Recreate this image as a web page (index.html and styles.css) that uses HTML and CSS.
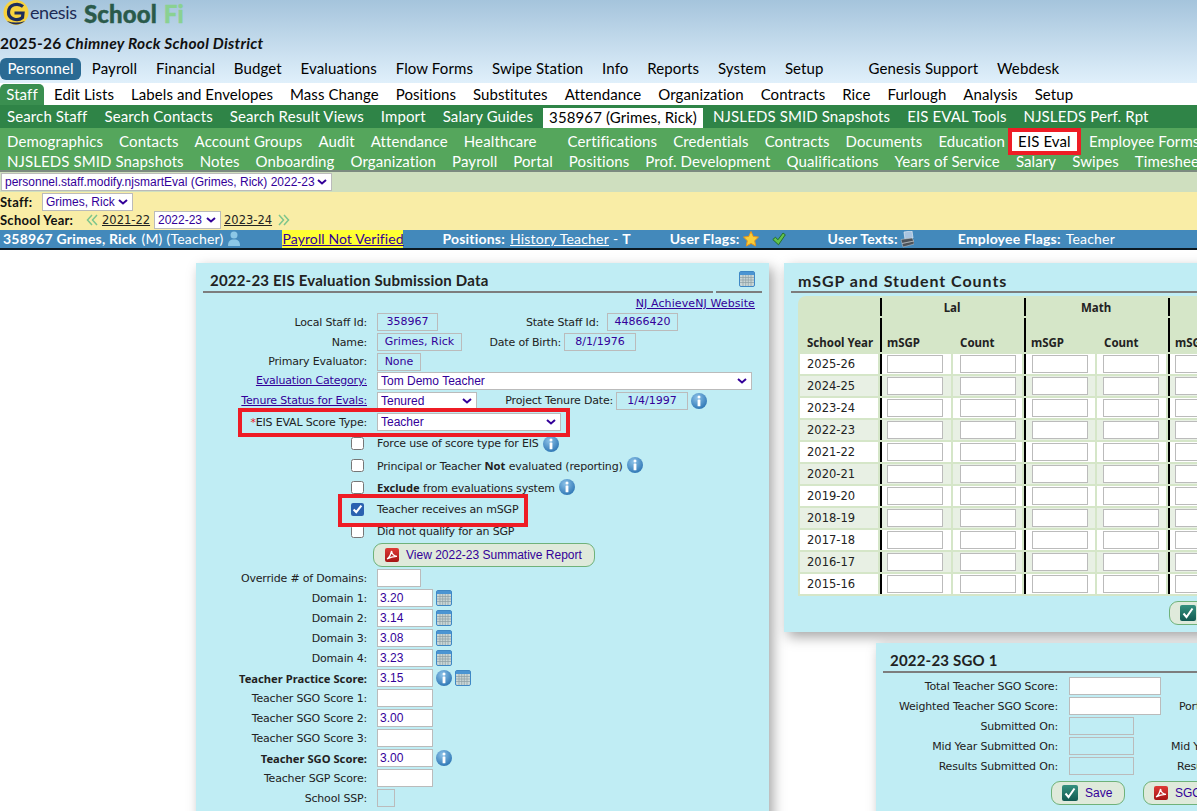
FILE: index.html
```html
<!DOCTYPE html>
<html lang="en">
<head>
<meta charset="utf-8">
<title>SchoolFi</title>
<link rel="stylesheet" href="styles.css">
</head>
<body>
<svg class="defs" width="0" height="0">
  <defs>
    <radialGradient id="gi" cx="40%" cy="30%" r="75%"><stop offset="0" stop-color="#8cc2e8"/><stop offset="1" stop-color="#2b74b3"/></radialGradient>
    <linearGradient id="gc" x1="0" y1="0" x2="0" y2="1"><stop offset="0" stop-color="#35917f"/><stop offset="1" stop-color="#125a52"/></linearGradient>
    <linearGradient id="gp" x1="0" y1="0" x2="0" y2="1"><stop offset="0" stop-color="#df3a36"/><stop offset="1" stop-color="#a51414"/></linearGradient>
    <symbol id="info" viewBox="0 0 16 16"><circle cx="8" cy="8" r="8" fill="url(#gi)"/><circle cx="8" cy="4" r="1.500" fill="#fff"/><rect x="6.600" y="6.500" width="2.800" height="6.800" rx=".4" fill="#fff"/></symbol>
    <symbol id="cal" viewBox="0 0 16 16"><rect x=".5" y=".5" width="15" height="15" rx="1.500" fill="#c9d6d6" stroke="#3f88c5"/><rect x="1" y="1" width="14" height="3" fill="#4b95d2"/><path d="M1 6.500h14M1 9h14M1 11.500h14M4 4v11M6.700 4v11M9.300 4v11M12 4v11" stroke="#8d9da3" stroke-width=".7"/></symbol>
    <symbol id="pdf" viewBox="0 0 14 14"><rect width="14" height="14" rx="2" fill="url(#gp)"/><path d="M2 11c2-1 3.500-3.500 4.600-8 .3 3 2 5 5.400 5.400C9 8.300 5.500 9 2 11z" fill="none" stroke="#fff" stroke-width="1.300"/></symbol>
    <symbol id="ok" viewBox="0 0 16 16"><rect width="16" height="16" rx="2" fill="url(#gc)"/><path d="M3.500 8.500l3 3.500 6-8.500" fill="none" stroke="#fff" stroke-width="2"/></symbol>
    <symbol id="dbl-l" viewBox="0 0 12 12"><path d="M6 1L1.500 6 6 11M11 1L6.500 6 11 11" fill="none" stroke="#7dc58c" stroke-width="1.500"/></symbol>
    <symbol id="dbl-r" viewBox="0 0 12 12"><path d="M1 1l4.500 5L1 11M6 1l4.500 5L6 11" fill="none" stroke="#7dc58c" stroke-width="1.500"/></symbol>
  </defs>
</svg>

<header class="top">
  <div class="logo">
    <svg class="g-mark" viewBox="0 0 28 26" width="28" height="26"><circle cx="14" cy="12.500" r="12.500" fill="#f7d23e"/><path d="M21 6.500C16 2.500 7 4 6.500 12c-.4 7 9 10 14 5.500l.5-4.500h-8.500" fill="none" stroke="#1e2d5c" stroke-width="3.200"/><path d="M5 21c5 4.500 13 4.500 18 0-6 2-12 2-18 0z" fill="#1e2d5c"/></svg>
    <span class="genesis">enesis</span>
    <span class="school">School<span class="fi">Fi</span></span>
  </div>
  <div class="district">2025-26 <em>Chimney Rock School District</em></div>
  <nav class="nav nav1">
    <a class="pill">Personnel</a><a>Payroll</a><a>Financial</a><a>Budget</a><a>Evaluations</a><a>Flow Forms</a><a>Swipe Station</a><a>Info</a><a>Reports</a><a>System</a><a>Setup</a><a class="far">Genesis Support</a><a>Webdesk</a>
  </nav>
</header>
<nav class="nav nav2">
  <a class="tab-green">Staff</a><a>Edit Lists</a><a>Labels and Envelopes</a><a>Mass Change</a><a>Positions</a><a>Substitutes</a><a>Attendance</a><a>Organization</a><a>Contracts</a><a>Rice</a><a>Furlough</a><a>Analysis</a><a>Setup</a>
</nav>
<nav class="nav nav3">
  <a>Search Staff</a><a>Search Contacts</a><a>Search Result Views</a><a>Import</a><a>Salary Guides</a><a class="tab-white">358967 (Grimes, Rick)</a><a>NJSLEDS SMID Snapshots</a><a>EIS EVAL Tools</a><a>NJSLEDS Perf. Rpt</a>
</nav>
<div class="sub">
  <nav class="nav nav4">
    <a>Demographics</a><a>Contacts</a><a>Account Groups</a><a>Audit</a><a>Attendance</a><a>Healthcare</a><a class="wide">Certifications</a><a>Credentials</a><a>Contracts</a><a>Documents</a><a>Education</a><a class="current">EIS Eval</a><a>Employee Forms</a>
  </nav>
  <nav class="nav nav5">
    <a>NJSLEDS SMID Snapshots</a><a>Notes</a><a>Onboarding</a><a>Organization</a><a>Payroll</a><a>Portal</a><a>Positions</a><a>Prof. Development</a><a>Qualifications</a><a>Years of Service</a><a>Salary</a><a>Swipes</a><a>Timesheets</a>
  </nav>
</div>
<div class="path-bar">
  <select class="sel sel-path"><option>personnel.staff.modify.njsmartEval (Grimes, Rick) 2022-23</option></select>
</div>
<div class="ctx">
  <div class="ctx-row"><b class="ctx-staff">Staff:</b><select class="sel sel-staff"><option>Grimes, Rick</option></select></div>
  <div class="ctx-row"><b class="ctx-year">School Year:</b><svg class="chev"><use href="#dbl-l"/></svg><a class="yr">2021-22</a><select class="sel sel-year"><option>2022-23</option></select><a class="yr">2023-24</a><svg class="chev chev-r"><use href="#dbl-r"/></svg></div>
</div>
<div class="bar">
  <b class="b-id">358967 Grimes, Rick</b><span class="b-m">(M)</span><span class="b-t">(Teacher)</span>
  <svg class="b-person" viewBox="0 0 12 16" width="12" height="16"><circle cx="6" cy="4" r="3.500" fill="#8cc7e6"/><path d="M0 15c0-5 2-6.500 6-6.500s6 1.500 6 6.500z" fill="#8cc7e6"/></svg>
  <a class="b-pay">Payroll Not Verified</a>
  <b class="b-pos">Positions:</b><a class="b-hist">History Teacher</a><span class="b-dash">- <b>T</b></span>
  <b class="b-uf">User Flags:</b>
  <svg class="b-star" viewBox="0 0 16 16" width="16" height="16"><path d="M8 .5l2.300 4.900 5.200.7-3.800 3.600 1 5.300L8 12.400 3.300 15l1-5.300L.5 6.100l5.200-.7z" fill="#f8cf3a" stroke="#e8951a" stroke-width="1"/></svg>
  <svg class="b-check" viewBox="0 0 14 14" width="14" height="14"><path d="M.8 7.500l2.700-2.300 2.400 2.600L11 1l2.300 1.800-6.800 10z" fill="#62c24c" stroke="#24702a" stroke-width="1"/></svg>
  <b class="b-ut">User Texts:</b>
  <svg class="b-phone" viewBox="0 0 14 17" width="14" height="17"><path d="M4 1l8-1 1 7-8 1.500z" fill="#a8c4e0" stroke="#dfe8f0" stroke-width=".7"/><path d="M1 8.500L12 7l2 3-12 2.500zM2 12.500L14 10v3L3 16z" fill="#4d5359" stroke="#c6ccd1" stroke-width=".5"/></svg>
  <b class="b-ef">Employee Flags:</b><span class="b-teach">Teacher</span>
</div>

<main class="main">
  <section class="panel p-eval">
    <div class="head">
      <h2>2022-23 EIS Evaluation Submission Data</h2>
      <span class="head-notch"></span>
      <svg class="ic-16 head-cal"><use href="#cal"/></svg>
    </div>
    <div class="linkrow"><a class="lnk">NJ AchieveNJ Website</a></div>

    <div class="row r20"><label>Local Staff Id:</label><span class="ro w61">358967</span><label class="l-state">State Staff Id:</label><span class="ro w71">44866420</span></div>
    <div class="row r20"><label>Name:</label><span class="ro w85">Grimes, Rick</span><label class="l-dob">Date of Birth:</label><span class="ro w72">8/1/1976</span></div>
    <div class="row r19"><label>Primary Evaluator:</label><span class="ro w44">None</span></div>
    <div class="row r19"><label><a class="lnk">Evaluation Category:</a></label><select class="sel w375"><option>Tom Demo Teacher</option></select></div>
    <div class="row r21"><label><a class="lnk">Tenure Status for Evals:</a></label><select class="sel w100"><option>Tenured</option></select><label class="l-ptd">Project Tenure Date:</label><span class="ro w72">1/4/1997</span><svg class="ic-16 ic-after"><use href="#info"/></svg></div>
    <div class="row r22 hl hl-type"><label><span class="req">*</span>EIS EVAL Score Type:</label><select class="sel w184"><option>Teacher</option></select></div>
    <div class="row r21 chk"><input type="checkbox"><span>Force use of score type for EIS</span><svg class="ic-16 ic-after"><use href="#info"/></svg></div>
    <div class="row r22 chk"><input type="checkbox"><span>Principal or Teacher <b>Not</b> evaluated (reporting)</span><svg class="ic-16 ic-after"><use href="#info"/></svg></div>
    <div class="row r22 chk"><input type="checkbox"><span><b>Exclude</b> from evaluations system</span><svg class="ic-16 ic-after"><use href="#info"/></svg></div>
    <div class="row r22 chk hl hl-msgp"><input type="checkbox" checked><span>Teacher receives an mSGP</span></div>
    <div class="row r22 chk"><input type="checkbox"><span>Did not qualify for an SGP</span></div>
    <div class="row r26 btn-row"><button class="btn btn-report"><svg class="ic-14"><use href="#pdf"/></svg>View 2022-23 Summative Report</button></div>
    <div class="row r20"><label>Override # of Domains:</label><input class="inp w44" type="text"></div>
    <div class="row r20"><label>Domain 1:</label><input class="inp w56" type="text" value="3.20"><svg class="ic-16 ic-after"><use href="#cal"/></svg></div>
    <div class="row r20"><label>Domain 2:</label><input class="inp w56" type="text" value="3.14"><svg class="ic-16 ic-after"><use href="#cal"/></svg></div>
    <div class="row r20"><label>Domain 3:</label><input class="inp w56" type="text" value="3.08"><svg class="ic-16 ic-after"><use href="#cal"/></svg></div>
    <div class="row r20"><label>Domain 4:</label><input class="inp w56" type="text" value="3.23"><svg class="ic-16 ic-after"><use href="#cal"/></svg></div>
    <div class="row r20"><label><b>Teacher Practice Score:</b></label><input class="inp w56" type="text" value="3.15"><svg class="ic-16 ic-after"><use href="#info"/></svg><svg class="ic-16 ic-next"><use href="#cal"/></svg></div>
    <div class="row r20"><label>Teacher SGO Score 1:</label><input class="inp w56" type="text"></div>
    <div class="row r20"><label>Teacher SGO Score 2:</label><input class="inp w56" type="text" value="3.00"></div>
    <div class="row r20"><label>Teacher SGO Score 3:</label><input class="inp w56" type="text"></div>
    <div class="row r20"><label><b>Teacher SGO Score:</b></label><input class="inp w56" type="text" value="3.00"><svg class="ic-16 ic-after"><use href="#info"/></svg></div>
    <div class="row r20"><label>Teacher SGP Score:</label><input class="inp w56" type="text"></div>
    <div class="row r20"><label>School SSP:</label><span class="ro w18 blank"></span></div>
  </section>

  <div class="right">
    <section class="panel p-msgp">
      <div class="head head-msgp"><h2>mSGP and Student Counts</h2></div>
      <table class="grid">
        <colgroup><col class="c1"><col class="c2"><col class="c3"><col class="c2"><col class="c3"><col class="c2"><col class="c3"></colgroup>
        <thead>
          <tr class="h1"><th></th><th colspan="2" class="div">Lal</th><th colspan="2" class="div">Math</th><th colspan="2" class="div"></th></tr>
          <tr class="h2"><th class="left">School Year</th><th class="div left">mSGP</th><th class="left l2">Count</th><th class="div left">mSGP</th><th class="left l2">Count</th><th class="div left">mSGP</th><th class="left l2"></th></tr>
        </thead>
        <tbody>
          <tr><td class="yrc">2025-26</td><td class="div"><input class="inp"></td><td><input class="inp"></td><td class="div"><input class="inp"></td><td><input class="inp"></td><td class="div"><input class="inp"></td><td></td></tr>
          <tr><td class="yrc">2024-25</td><td class="div"><input class="inp"></td><td><input class="inp"></td><td class="div"><input class="inp"></td><td><input class="inp"></td><td class="div"><input class="inp"></td><td></td></tr>
          <tr><td class="yrc">2023-24</td><td class="div"><input class="inp"></td><td><input class="inp"></td><td class="div"><input class="inp"></td><td><input class="inp"></td><td class="div"><input class="inp"></td><td></td></tr>
          <tr><td class="yrc">2022-23</td><td class="div"><input class="inp"></td><td><input class="inp"></td><td class="div"><input class="inp"></td><td><input class="inp"></td><td class="div"><input class="inp"></td><td></td></tr>
          <tr><td class="yrc">2021-22</td><td class="div"><input class="inp"></td><td><input class="inp"></td><td class="div"><input class="inp"></td><td><input class="inp"></td><td class="div"><input class="inp"></td><td></td></tr>
          <tr><td class="yrc">2020-21</td><td class="div"><input class="inp"></td><td><input class="inp"></td><td class="div"><input class="inp"></td><td><input class="inp"></td><td class="div"><input class="inp"></td><td></td></tr>
          <tr><td class="yrc">2019-20</td><td class="div"><input class="inp"></td><td><input class="inp"></td><td class="div"><input class="inp"></td><td><input class="inp"></td><td class="div"><input class="inp"></td><td></td></tr>
          <tr><td class="yrc">2018-19</td><td class="div"><input class="inp"></td><td><input class="inp"></td><td class="div"><input class="inp"></td><td><input class="inp"></td><td class="div"><input class="inp"></td><td></td></tr>
          <tr><td class="yrc">2017-18</td><td class="div"><input class="inp"></td><td><input class="inp"></td><td class="div"><input class="inp"></td><td><input class="inp"></td><td class="div"><input class="inp"></td><td></td></tr>
          <tr><td class="yrc">2016-17</td><td class="div"><input class="inp"></td><td><input class="inp"></td><td class="div"><input class="inp"></td><td><input class="inp"></td><td class="div"><input class="inp"></td><td></td></tr>
          <tr><td class="yrc">2015-16</td><td class="div"><input class="inp"></td><td><input class="inp"></td><td class="div"><input class="inp"></td><td><input class="inp"></td><td class="div"><input class="inp"></td><td></td></tr>
        </tbody>
      </table>
      <div class="msgp-actions"><button class="btn"><svg class="ic-16b"><use href="#ok"/></svg>Save</button></div>
    </section>

    <section class="panel p-sgo">
      <div class="head head-sgo"><h2>2022-23 SGO 1</h2></div>
      <div class="row r20 s"><label>Total Teacher SGO Score:</label><input class="inp w92" type="text"></div>
      <div class="row r20 s"><label>Weighted Teacher SGO Score:</label><input class="inp w92" type="text"><label class="l-por">Portion of Final Score:</label></div>
      <div class="row r20 s"><label>Submitted On:</label><span class="ro w65 blank"></span></div>
      <div class="row r20 s"><label>Mid Year Submitted On:</label><span class="ro w65 blank"></span><label class="l-mid">Mid Year Submitted By:</label></div>
      <div class="row r20 s"><label>Results Submitted On:</label><span class="ro w65 blank"></span><label class="l-res">Results Submitted By:</label></div>
      <div class="sgo-actions">
        <button class="btn btn-save"><svg class="ic-16b"><use href="#ok"/></svg>Save</button>
        <button class="btn btn-sgo"><svg class="ic-14"><use href="#pdf"/></svg>SGO Report</button>
      </div>
    </section>
  </div>
</main>
</body>
</html>
```

FILE: styles.css
```css
*, *::after { box-sizing: border-box; }
html, body { margin: 0; height: 811px; overflow: hidden; background: #fff; }
body { width: 1197px; font-family: "DejaVu Sans", sans-serif; font-size: 11px; color: #222; }
.defs { position: absolute; }

/* header */
.top { height: 83px; background: linear-gradient(#a5c4dc, #e0f0fb); }
.logo { height: 30px; display: flex; align-items: flex-start; padding-left: 2px; }
.g-mark { display: block; }
.genesis { font: 18px/25px "Lato", sans-serif; color: #1d2b55; letter-spacing: -.4px; width: 54px; }
.school { font: 900 24px/27px "Lato", sans-serif; color: #2a5a4a; letter-spacing: .1px; -webkit-text-stroke: .4px #2a5a4a; }
.fi { color: #8ad192; margin-left: 7px; -webkit-text-stroke: .4px #8ad192; }
.district { height: 28px; padding-top: 5px; font: 700 15.5px/17px "Lato", sans-serif; color: #111; letter-spacing: .25px; }

.nav { display: flex; font: 15px/20px "Lato", sans-serif; white-space: nowrap; letter-spacing: .12px; }
.nav a { display: block; flex: none; }
.nav1 { height: 25px; color: #000; gap: 18.800px; }
.pill { background: #2a6a93; color: #fff; border-radius: 6px; width: 81px; height: 22px; line-height: 21px; text-align: center; margin-right: -8px; }
.far { margin-left: 26px; }
.nav2 { height: 22px; background: #fff; color: #000; gap: 17px; padding-top: 1px; line-height: 21px; letter-spacing: .08px; }
.tab-green { background: #3a8f50; color: #fff; width: 44px; border-radius: 5px 5px 0 0; text-align: center; margin-right: -7px; }
.nav3 { height: 23px; background: #2f8447; color: #fff; gap: 17px; padding-left: 7px; line-height: 23px; }
.tab-white { background: #fff; color: #000; width: 160px; height: 20px; margin-top: 3px; line-height: 19px; text-align: center; margin-left: -7px; margin-right: -7px; }
.sub { height: 44px; background: #55a65c; border-bottom: 2px solid #7c8a80; overflow: hidden; }
.nav4, .nav5 { color: #fff; padding-left: 7px; gap: 16px; }
.nav4 { height: 24px; line-height: 26px; }
.nav5 { height: 18px; line-height: 18px; letter-spacing: .1px; }
.wide { margin-left: 15px; }
.current { background: #fff; color: #000; border: 4px solid #ee1c25; width: 73px; height: 27px; margin: 0 -8px 0 -13px; line-height: 19px; text-align: center; }

.path-bar { height: 20px; background: #cfdfbf; padding: 1px 0 0 1px; }
.sel { font: 12px "Liberation Sans", sans-serif; color: #330099; border: 1px solid #bbb; height: 18px; padding: 0 0 0 3px; border-radius: 0; appearance: none; background: #fff url("data:image/svg+xml,%3Csvg xmlns='http://www.w3.org/2000/svg' viewBox='0 0 10 6'%3E%3Cpath d='M1 1l4 3.500L9 1' fill='none' stroke='%23330099' stroke-width='2'/%3E%3C/svg%3E") no-repeat right 4px center / 10px 6px; }
.sel-path { width: 331px; display: block; }
.ctx { height: 38px; background: #f9eda6; padding-top: 1px; }
.ctx-row { height: 18px; display: flex; align-items: center; font: 13px "Lato", sans-serif; color: #111; letter-spacing: .25px; }
.ctx-staff { width: 42px; }
.sel-staff { width: 91px; letter-spacing: 0; }
.ctx-year { width: 86px; }
.chev { width: 12px; height: 12px; margin-right: 4px; flex: none; }
.chev-r { margin: 0 0 0 2px; }
.yr { font: 11.500px "DejaVu Sans", sans-serif; letter-spacing: 0; text-decoration: underline; color: #222; width: 52px; }
.sel-year { width: 67px; margin-right: 3px; letter-spacing: 0; }

.bar { height: 20px; background: #4389bb; border-bottom: 2px solid #0c1a24; color: #fff; display: flex; align-items: center; font: 14px/18px "Lato", sans-serif; white-space: nowrap; padding-left: 3px; letter-spacing: .2px; }
.bar > * { flex: none; }
.b-m { margin-left: 5px; }
.b-t { margin-left: 4px; }
.b-person { margin-left: 5px; }
.b-pay { background: #ffff33; color: #330099; text-decoration: underline; margin-left: 42px; width: 121px; letter-spacing: .1px; }
.b-pos { margin-left: 39px; }
.b-hist { text-decoration: underline; margin-left: 5px; }
.b-dash { margin-left: 4px; }
.b-uf { margin-left: 39px; }
.b-star { margin-left: 3px; }
.b-check { margin-left: 13px; }
.b-ut { margin-left: 42px; }
.b-phone { margin-left: 2px; }
.b-ef { margin-left: 44px; }
.b-teach { margin-left: 5px; }

/* panels */
.main { display: flex; align-items: flex-start; padding: 13px 0 0 196px; gap: 15px; width: 1700px; }
.panel { background: #c0edf4; box-shadow: 4px 5px 12px rgba(0,0,0,.35); flex: none; }
.p-eval { width: 573px; height: 560px; }
.right { width: 500px; flex: none; }
.head { height: 30px; margin: 0 7px; border-bottom: 2px solid #7d7d7d; position: relative; padding-left: 7px; }
.head h2 { margin: 0; font: 700 15px/35px "Lato", sans-serif; color: #222; letter-spacing: .2px; }
.head-msgp h2 { font-size: 16px; letter-spacing: .95px; }
.head-cal { position: absolute; right: 7px; top: 8px; }
.head-notch { position: absolute; right: 46px; bottom: -2px; width: 3px; height: 2px; background: #c0edf4; }
.linkrow { height: 19px; padding: 4px 14px 0 0; text-align: right; letter-spacing: .1px; }
.lnk { color: #330099; text-decoration: underline; }

.row { display: flex; align-items: center; white-space: nowrap; }
.r19 { height: 19px; } .r20 { height: 20px; } .r21 { height: 21px; } .r22 { height: 22px; } .r26 { height: 26px; }
.row > label, .chk > span { letter-spacing: -.18px; }
.row > label { flex: none; width: 171px; text-align: right; margin-right: 10px; }
.row > label.l-state { width: 161px; margin-right: 8px; }
.row > label.l-dob { width: 99px; margin-right: 3px; }
.row > label.l-ptd { width: 136px; margin-right: 3px; }
.row b { font: 700 11.200px "Noto Sans", sans-serif; letter-spacing: 0; }
.ro { display: block; flex: none; height: 18px; border: 1px solid #bbb; color: #330099; text-align: center; line-height: 16px; }
.blank { background: transparent; }
.w18 { width: 18px; } .w44 { width: 44px; } .w56 { width: 56px; } .w61 { width: 61px; } .w65 { width: 65px; } .w71 { width: 71px; } .w72 { width: 72px; } .w85 { width: 85px; } .w92 { width: 92px; } .w100 { width: 100px; } .w184 { width: 184px; } .w375 { width: 375px; }
.inp { display: block; flex: none; height: 18px; border: 1px solid #bbb; background: #fff; color: #330099; font: 12px "Liberation Sans", sans-serif; padding: 0 2px; margin: 0; border-radius: 0; outline: none; }
.ic-16, .ic-16b { width: 16px; height: 16px; flex: none; display: block; }
.ic-14 { width: 14px; height: 14px; flex: none; display: block; }
.ic-after { margin-left: 3px; }
.ic-next { margin-left: 3px; }
.chk .ic-after { margin-left: 4px; }
.req { color: #ee1c25; }
.chk { padding-left: 155px; }
.chk input { width: 13px; height: 13px; margin: 0 13px 0 0; flex: none; accent-color: #2b62b0; }
.hl { position: relative; }
.hl::after { content: ""; position: absolute; border: 4px solid #ee1c25; pointer-events: none; }
.hl-type::after { left: 42px; top: -3px; width: 332px; height: 29px; }
.hl-msgp::after { left: 142px; top: -4px; width: 190px; height: 33px; }

.btn { display: inline-flex; align-items: center; gap: 7px; height: 24px; border: 1px solid #6fb27a; border-radius: 9px; background: #dfeadb; color: #330099; font: 12px "Liberation Sans", sans-serif; padding: 0 10px; white-space: nowrap; margin: 0; }
.btn-row { padding-left: 177px; }
.btn-report { width: 222px; padding: 0 10px 0 11px; gap: 7px; }

/* mSGP */
.p-msgp { width: 500px; height: 369px; }
.head-msgp { margin-right: 0; }
.grid { border-collapse: separate; border-spacing: 2px; table-layout: fixed; margin: 3px 0 0 14px; background: #d5e6c8; border-radius: 8px 8px 0 0; width: 500px; }
.c1 { width: 78px; } .c2 { width: 71px; } .c3 { width: 69px; }
.grid th { font: 700 11.500px "Noto Sans", sans-serif; padding: 0; color: #222; vertical-align: middle; }
.h1 th { height: 18px; }
.h2 th { height: 34px; vertical-align: bottom; padding-bottom: 2px; text-align: left; }
.h2 th:first-child { padding-left: 7px; white-space: nowrap; }
.h2 .div { padding-left: 5px; }
.h2 .l2 { padding-left: 7px; }
.div { border-left: 2px solid #000; }
.grid td { padding: 0; height: 20px; background: #fff; }
.grid tbody tr:nth-child(even) td { background: #e8f0e4; }
.grid td .inp { width: 56px; margin-left: 7px; }
.grid td.div .inp { margin-left: 5px; }
.grid td:nth-child(4) .inp, .grid td:nth-child(5) .inp { margin-left: 6px; }
.yrc { padding-left: 7px !important; font-size: 11.500px; }
.msgp-actions { padding: 5px 0 0 385px; }
.msgp-actions .btn { width: 80px; }

/* SGO */
.p-sgo { width: 410px; height: 200px; margin: 11px 0 0 92px; }
.head-sgo { height: 30px; }
.p-sgo .head { margin-bottom: 3px; }
.s > label { width: 182px; margin-right: 11px; }
.s > label.l-por { width: auto; margin: 0 0 0 18px; }
.s > label.l-mid { width: auto; margin: 0 0 0 37px; }
.s > label.l-res { width: auto; margin: 0 0 0 43px; }
.sgo-actions { display: flex; gap: 18px; padding: 5px 0 0 175px; }
.btn-save { width: 74px; padding: 0 10px; gap: 7px; }
.btn-sgo { width: 110px; padding: 0 10px; gap: 7px; }
```
